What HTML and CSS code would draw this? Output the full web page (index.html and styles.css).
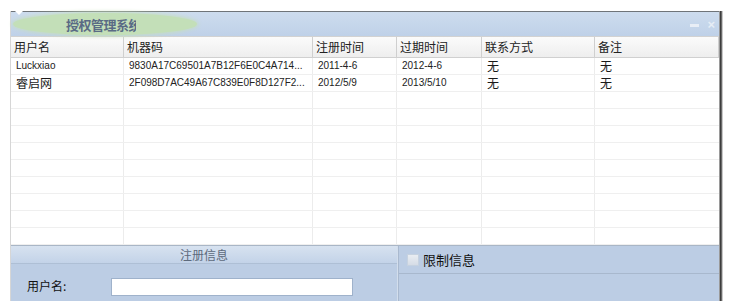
FILE: index.html
```html
<!DOCTYPE html>
<html lang="zh">
<head>
<meta charset="utf-8">
<link rel="stylesheet" href="styles.css">
</head>
<body>
<div class="window">
  <div class="titlebar">
    <span class="notch"></span>
    <div class="title-blob"><span class="title-text">授权管理系统</span></div>
    <div class="controls"><span class="min"></span><span class="close">×</span></div>
  </div>
  <div class="grid">
    <div class="row head">
      <div class="cell">用户名</div><div class="cell">机器码</div><div class="cell">注册时间</div><div class="cell">过期时间</div><div class="cell">联系方式</div><div class="cell">备注</div>
    </div>
    <div class="row">
      <div class="cell lat">Luckxiao</div><div class="cell lat">9830A17C69501A7B12F6E0C4A714...</div><div class="cell lat">2011-4-6</div><div class="cell lat">2012-4-6</div><div class="cell">无</div><div class="cell">无</div>
    </div>
    <div class="row">
      <div class="cell">睿启网</div><div class="cell lat">2F098D7AC49A67C839E0F8D127F2...</div><div class="cell lat">2012/5/9</div><div class="cell lat">2013/5/10</div><div class="cell">无</div><div class="cell">无</div>
    </div>
    <div class="row"><div class="cell"></div><div class="cell"></div><div class="cell"></div><div class="cell"></div><div class="cell"></div><div class="cell"></div></div>
    <div class="row"><div class="cell"></div><div class="cell"></div><div class="cell"></div><div class="cell"></div><div class="cell"></div><div class="cell"></div></div>
    <div class="row"><div class="cell"></div><div class="cell"></div><div class="cell"></div><div class="cell"></div><div class="cell"></div><div class="cell"></div></div>
    <div class="row"><div class="cell"></div><div class="cell"></div><div class="cell"></div><div class="cell"></div><div class="cell"></div><div class="cell"></div></div>
    <div class="row"><div class="cell"></div><div class="cell"></div><div class="cell"></div><div class="cell"></div><div class="cell"></div><div class="cell"></div></div>
    <div class="row"><div class="cell"></div><div class="cell"></div><div class="cell"></div><div class="cell"></div><div class="cell"></div><div class="cell"></div></div>
    <div class="row"><div class="cell"></div><div class="cell"></div><div class="cell"></div><div class="cell"></div><div class="cell"></div><div class="cell"></div></div>
    <div class="row"><div class="cell"></div><div class="cell"></div><div class="cell"></div><div class="cell"></div><div class="cell"></div><div class="cell"></div></div>
    <div class="row"><div class="cell"></div><div class="cell"></div><div class="cell"></div><div class="cell"></div><div class="cell"></div><div class="cell"></div></div>
  </div>
  <div class="panels">
    <div class="reg">
      <div class="reg-head">注册信息</div>
      <div class="reg-body">
        <div class="field"><span class="label">用户名:</span><span class="input"></span></div>
      </div>
    </div>
    <div class="limit">
      <div class="limit-head"><span class="check"></span><span class="limit-title">限制信息</span></div>
      <div class="limit-body"></div>
    </div>
  </div>
</div>
</body>
</html>
```
FILE: styles.css
```css
html, body {
  margin: 0;
  padding: 0;
  background: #ffffff;
  overflow: hidden;
}
body {
  font-family: "Noto Sans CJK SC", "Liberation Sans", sans-serif;
  font-size: 12px;
  color: #1a1a1a;
}
.window {
  margin: 11px 0 0 10px;
  width: 709px;
  height: 300px;
  background: #ffffff;
  box-shadow: 1px 0 0 #9a9a9a, 2px 0 0 #3c3c3c, 3px 0 0 #6a6a6a, 4px 0 0 #c8c8c8;
  border-left: 1px solid #d6d6d6;
  box-sizing: border-box;
}
.titlebar {
  position: relative;
  height: 25px;
  border-top: 1px solid #6f7479;
  background: linear-gradient(#cddcee, #bfd1e8);
  display: flex;
  align-items: center;
  box-sizing: border-box;
}
.notch {
  position: absolute;
  left: 4px;
  top: -1px;
  width: 0;
  height: 0;
  border-left: 4px solid transparent;
  border-right: 4px solid transparent;
  border-top: 4px solid #ffffff;
}
.title-blob {
  margin-left: 2px;
  width: 184px;
  height: 22px;
  border-radius: 92px / 11px;
  background: #c3dfb8;
  box-shadow: 0 0 4px 1px #c6dfbb;
  display: flex;
  align-items: center;
}
.title-text {
  margin-left: 53px;
  width: 70px;
  overflow: hidden;
  white-space: nowrap;
  font-size: 13px;
  font-weight: bold;
  color: #5a6b85;
  letter-spacing: -0.5px;
}
.controls {
  margin-left: auto;
  margin-right: 4px;
  display: flex;
  align-items: center;
  gap: 8px;
}
.min {
  width: 9px;
  height: 3px;
  background: #e8eef6;
  margin-top: 2px;
}
.close {
  font-family: "Liberation Sans", sans-serif;
  font-size: 13px;
  line-height: 13px;
  color: #e6edf5;
  font-weight: bold;
}
.grid {
  display: flex;
  flex-direction: column;
}
.row {
  display: grid;
  grid-template-columns: 113px 189px 84px 85px 113px 1fr;
  height: 17px;
  border-bottom: 1px solid #efefef;
  box-sizing: border-box;
}
.row .cell {
  border-right: 1px solid #ececec;
  padding-left: 5px;
  line-height: 16px;
  white-space: nowrap;
  overflow: hidden;
}
.row .cell:last-child {
  border-right: none;
}
.row.head {
  height: 22px;
  background: linear-gradient(#fbfbfb, #eeeeee);
  border-top: 1px solid #d2d2d2;
  border-bottom: 1px solid #d0d0d0;
}
.row.head .cell {
  border-right: 1px solid #cfcfcf;
  line-height: 20px;
  padding-left: 3px;
  font-size: 12px;
  color: #222;
}
.lat {
  font-family: "Liberation Sans", sans-serif;
  font-size: 10px;
  color: #222;
}
.panels {
  display: flex;
  height: 60px;
  border-top: 1px solid #a9b6c6;
  background: #bccde4;
}
.reg {
  width: 386px;
  border-right: 1px solid #d3deec;
}
.reg-head {
  height: 17px;
  text-align: center;
  line-height: 17px;
  font-size: 12px;
  color: #5d6a7c;
  background: linear-gradient(#d7e2f0, #c3d3e8);
  border-bottom: 1px solid #aebfd5;
}
.reg-body {
  padding: 14px 0 0 16px;
}
.field {
  display: flex;
  align-items: center;
}
.label {
  width: 84px;
  font-size: 12px;
  color: #111;
  margin-top: -4px;
}
.input {
  width: 242px;
  height: 18px;
  background: #ffffff;
  border: 1px solid #9fb2cb;
  box-sizing: border-box;
}
.limit {
  flex: 1;
  border-left: 1px solid #a9b9cf;
}
.limit-head {
  height: 27px;
  display: flex;
  align-items: center;
  padding-left: 8px;
  border-bottom: 1px solid #a8b8cd;
}
.check {
  width: 10px;
  height: 10px;
  border: 1px solid #c6d2e0;
  background: linear-gradient(#e9edf2, #d5dce6);
  margin-right: 4px;
}
.limit-title {
  font-size: 13px;
  color: #111;
}
```
